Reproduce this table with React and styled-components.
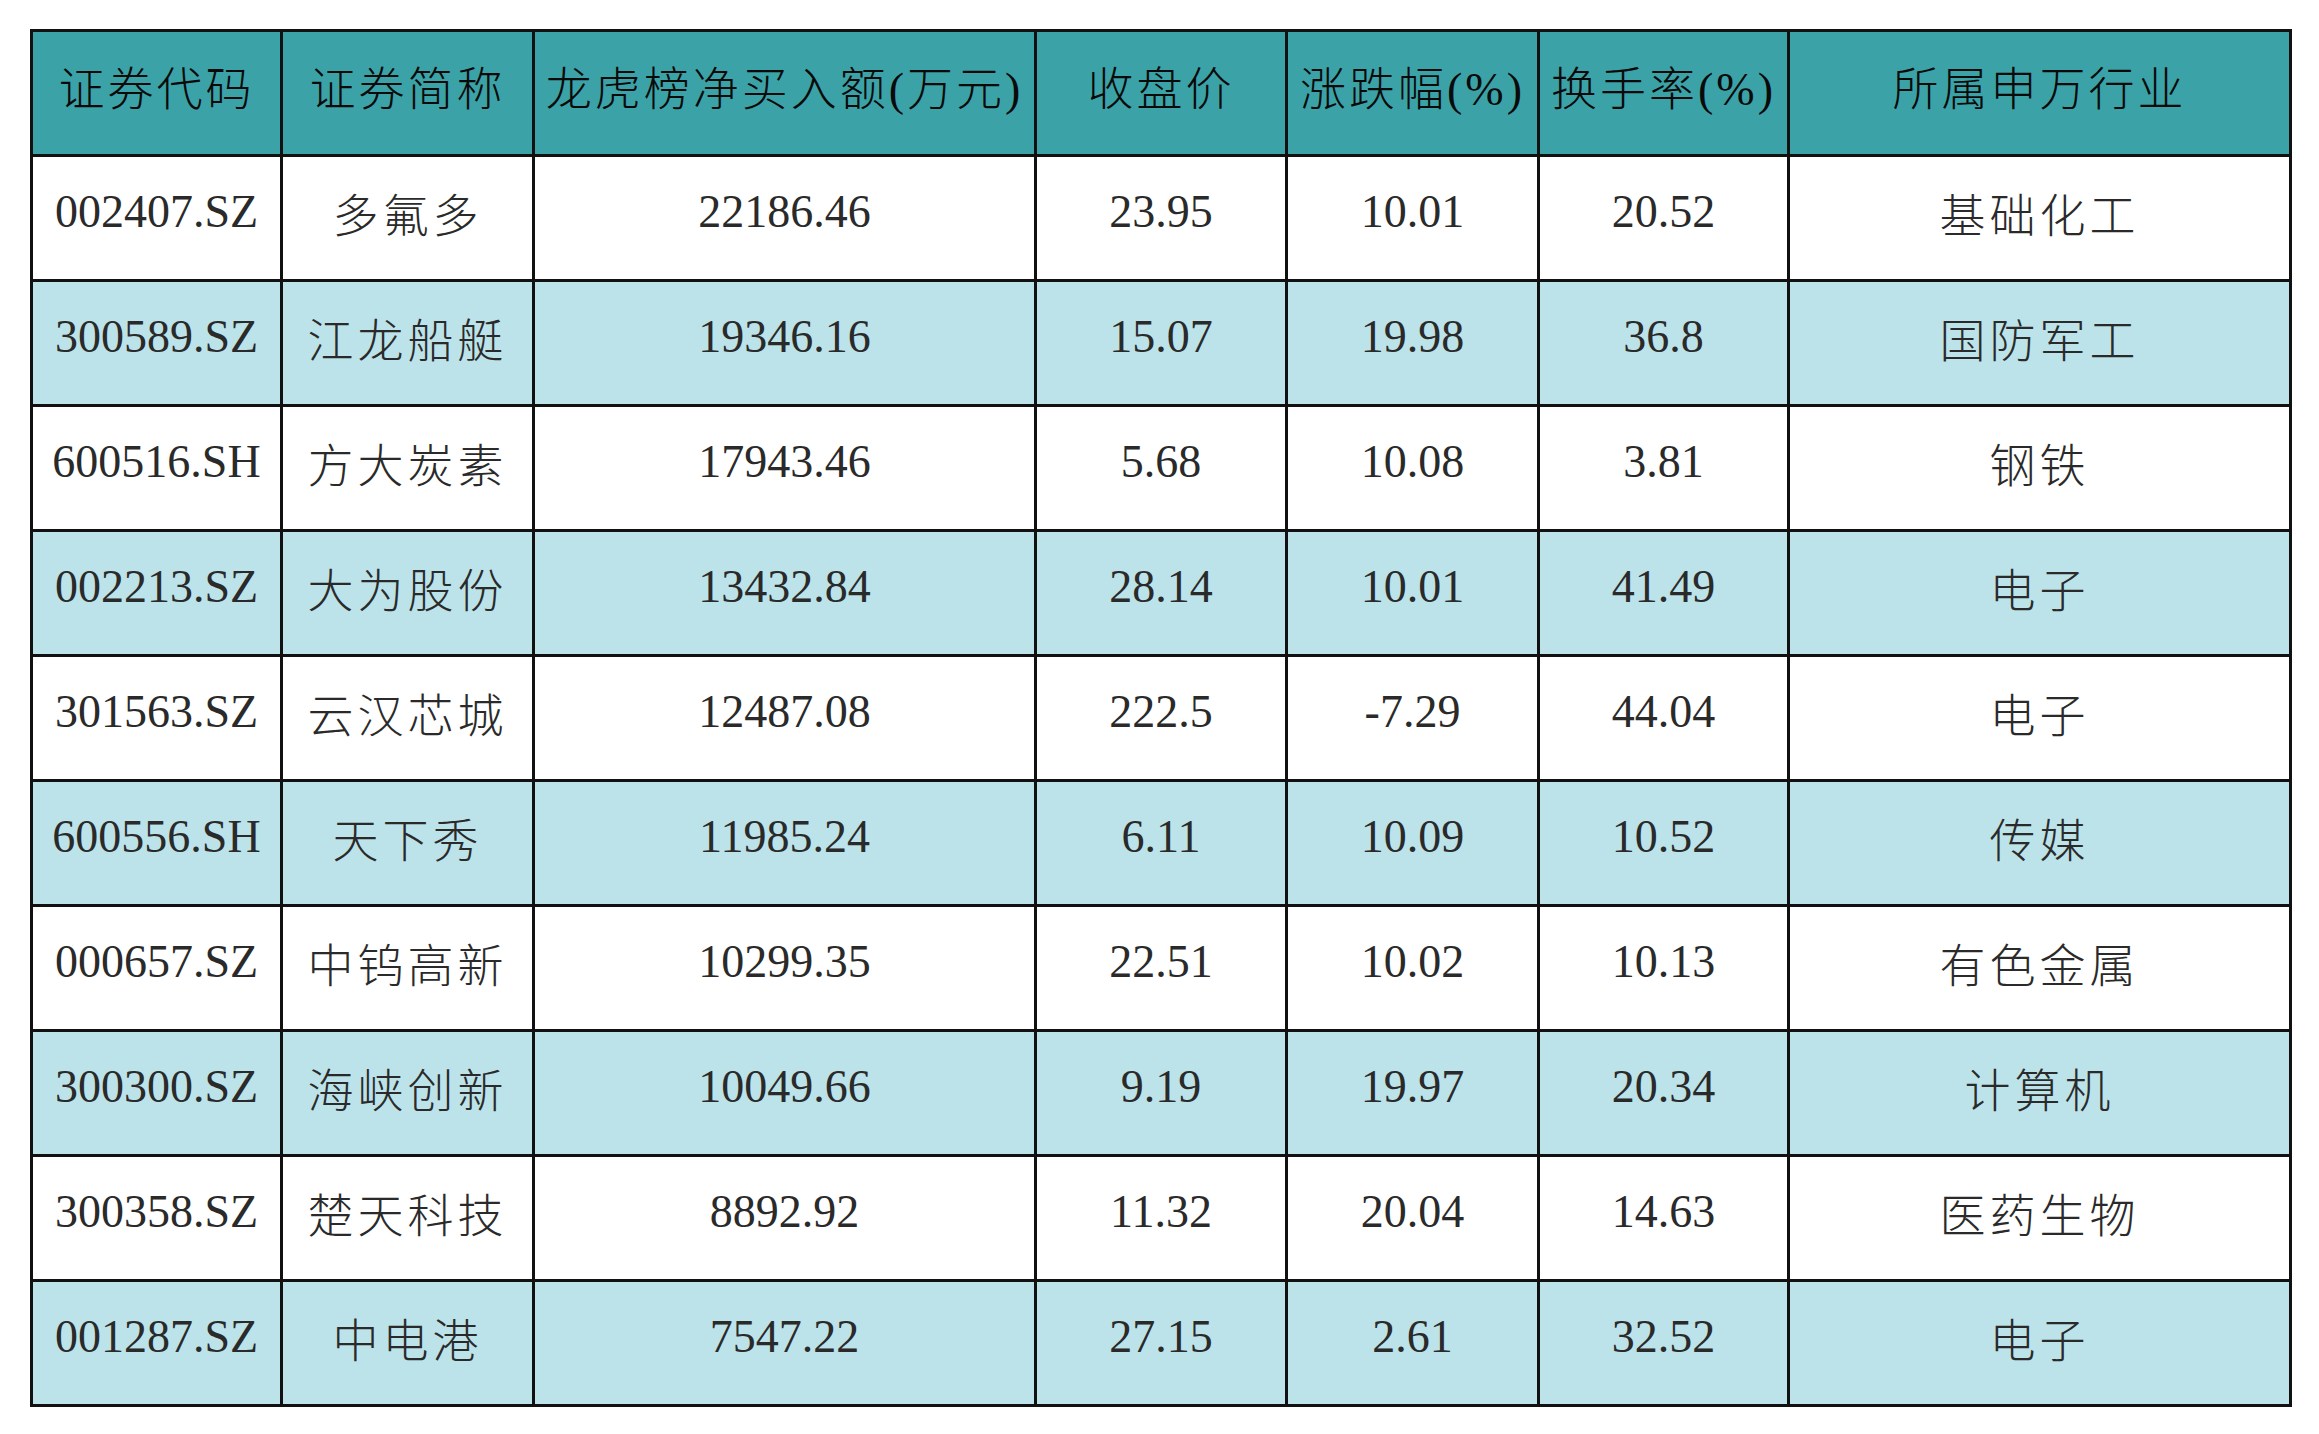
import styled, { createGlobalStyle } from 'styled-components';

const GlobalStyle = createGlobalStyle`
  html, body {
    margin: 0;
    padding: 0;
    background: #ffffff;
  }
  body {
    font-family: "Liberation Serif", "Noto Sans CJK SC", serif;
  }
`;

const COLUMNS = [
    { key: 'code', title: '证券代码', width: 250 },
    { key: 'name', title: '证券简称', width: 252, cjk: true },
    { key: 'net', title: '龙虎榜净买入额(万元)', width: 502 },
    { key: 'close', title: '收盘价', width: 251 },
    { key: 'change', title: '涨跌幅(%)', width: 252 },
    { key: 'turnover', title: '换手率(%)', width: 250 },
    { key: 'industry', title: '所属申万行业', width: 502, cjk: true },
];

const ROWS = [
    { code: '002407.SZ', name: '多氟多', net: '22186.46', close: '23.95', change: '10.01', turnover: '20.52', industry: '基础化工' },
    { code: '300589.SZ', name: '江龙船艇', net: '19346.16', close: '15.07', change: '19.98', turnover: '36.8', industry: '国防军工' },
    { code: '600516.SH', name: '方大炭素', net: '17943.46', close: '5.68', change: '10.08', turnover: '3.81', industry: '钢铁' },
    { code: '002213.SZ', name: '大为股份', net: '13432.84', close: '28.14', change: '10.01', turnover: '41.49', industry: '电子' },
    { code: '301563.SZ', name: '云汉芯城', net: '12487.08', close: '222.5', change: '-7.29', turnover: '44.04', industry: '电子' },
    { code: '600556.SH', name: '天下秀', net: '11985.24', close: '6.11', change: '10.09', turnover: '10.52', industry: '传媒' },
    { code: '000657.SZ', name: '中钨高新', net: '10299.35', close: '22.51', change: '10.02', turnover: '10.13', industry: '有色金属' },
    { code: '300300.SZ', name: '海峡创新', net: '10049.66', close: '9.19', change: '19.97', turnover: '20.34', industry: '计算机' },
    { code: '300358.SZ', name: '楚天科技', net: '8892.92', close: '11.32', change: '20.04', turnover: '14.63', industry: '医药生物' },
    { code: '001287.SZ', name: '中电港', net: '7547.22', close: '27.15', change: '2.61', turnover: '32.52', industry: '电子' },
];

const Page = styled.div`
    padding: 29px 0 0 30px;
`;

const Table = styled.table`
    border-collapse: collapse;
    table-layout: fixed;
    width: 2259px;
    font-family: "Liberation Serif", "Noto Sans CJK SC", serif;
    font-size: 46px;
`;

const HeadCell = styled.th`
    height: 105px;
    padding: 0 0 17px;
    border: 3px solid #111111;
    background: #3ba3a7;
    color: #0a0a0a;
    font-weight: 300;
    letter-spacing: 3px;
    text-align: center;
    white-space: nowrap;
`;

const Row = styled.tr`
    background: ${(p) => (p.$shaded ? '#bce3e9' : '#ffffff')};
`;

const Cell = styled.td`
    height: 109px;
    padding: 0 0 13px;
    border: 3px solid #111111;
    color: #2a2a2a;
    font-weight: 300;
    text-align: center;
    white-space: nowrap;
    letter-spacing: ${(p) => (p.$cjk ? '4px' : '0')};
`;

export default function App() {
    return (
        <Page>
            <GlobalStyle />
            <Table>
                <colgroup>
                    {COLUMNS.map((col) => (
                        <col key={col.key} style={{ width: col.width }} />
                    ))}
                </colgroup>
                <thead>
                    <tr>
                        {COLUMNS.map((col) => (
                            <HeadCell key={col.key}>{col.title}</HeadCell>
                        ))}
                    </tr>
                </thead>
                <tbody>
                    {ROWS.map((row, i) => (
                        <Row key={row.code} $shaded={i % 2 === 1}>
                            {COLUMNS.map((col) => (
                                <Cell key={col.key} $cjk={col.cjk}>{row[col.key]}</Cell>
                            ))}
                        </Row>
                    ))}
                </tbody>
            </Table>
        </Page>
    );
}
